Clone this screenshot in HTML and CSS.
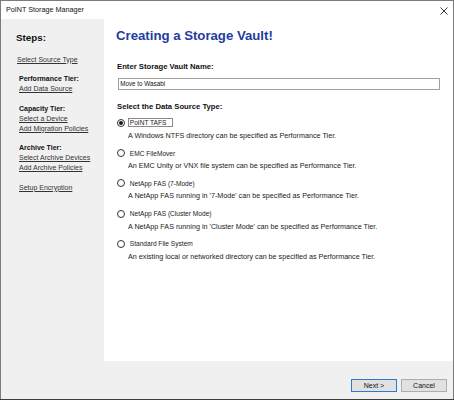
FILE: index.html
```html
<!DOCTYPE html>
<html>
<head>
<meta charset="utf-8">
<link rel="stylesheet" href="styles.css">
</head>
<body>
<div class="window">
  <div class="titlebar">
    <span class="title">PoINT Storage Manager</span>
    <svg class="close" width="8" height="8" viewBox="0 0 8 8"><path d="M0.5 0.5L7.5 7.5M7.5 0.5L0.5 7.5" stroke="#222" stroke-width="0.9" fill="none"/></svg>
  </div>
  <div class="main">
    <aside class="sidebar">
      <div class="steps">Steps:</div>
      <div class="group first"><a class="link">Select Source Type</a></div>
      <div class="group"><div class="head">Performance Tier:</div><a class="link">Add Data Source</a></div>
      <div class="group"><div class="head">Capacity Tier:</div><a class="link">Select a Device</a><a class="link">Add Migration Policies</a></div>
      <div class="group"><div class="head">Archive Tier:</div><a class="link">Select Archive Devices</a><a class="link">Add Archive Policies</a></div>
      <div class="group"><a class="link">Setup Encryption</a></div>
    </aside>
    <section class="content">
      <h1 class="heading">Creating a Storage Vault!</h1>
      <div class="label first-label">Enter Storage Vault Name:</div>
      <div class="input">Move to Wasabi</div>
      <div class="label second-label">Select the Data Source Type:</div>
      <div class="options">
        <div class="option">
          <div class="opt-row"><span class="radio checked"></span><span class="opt-label focused">PoINT TAFS</span></div>
          <div class="desc">A Windows NTFS directory can be specified as Performance Tier.</div>
        </div>
        <div class="option">
          <div class="opt-row"><span class="radio"></span><span class="opt-label">EMC FileMover</span></div>
          <div class="desc">An EMC Unity or VNX file system can be specified as Performance Tier.</div>
        </div>
        <div class="option">
          <div class="opt-row"><span class="radio"></span><span class="opt-label">NetApp FAS (7-Mode)</span></div>
          <div class="desc">A NetApp FAS running in '7-Mode' can be specified as Performance Tier.</div>
        </div>
        <div class="option">
          <div class="opt-row"><span class="radio"></span><span class="opt-label">NetApp FAS (Cluster Mode)</span></div>
          <div class="desc">A NetApp FAS running in 'Cluster Mode' can be specified as Performance Tier.</div>
        </div>
        <div class="option">
          <div class="opt-row"><span class="radio"></span><span class="opt-label">Standard File System</span></div>
          <div class="desc">An existing local or networked directory can be specified as Performance Tier.</div>
        </div>
      </div>
    </section>
  </div>
  <div class="footer">
    <button class="btn default">Next &gt;</button>
    <button class="btn">Cancel</button>
  </div>
</div>
</body>
</html>
```
FILE: styles.css
```css
* { box-sizing: border-box; }
html, body { margin: 0; padding: 0; }
body {
  width: 454px;
  height: 400px;
  background: #3d3d3d;
  font-family: "Liberation Sans", Arial, sans-serif;
  color: #1a1a1a;
  overflow: hidden;
}
.window {
  width: 454px;
  height: 399px;
  border: 1px solid #7c7c7c;
  border-bottom: none;
  display: flex;
  flex-direction: column;
  background: #f0f0f0;
}
.titlebar {
  height: 18px;
  background: #fff;
  display: flex;
  align-items: center;
  justify-content: space-between;
  padding: 0 5px 0 5px;
}
.title {
  font-size: 7.2px;
  line-height: 18px;
  color: #111;
}
.close { margin-top: 1px; margin-right: 0; }
.main {
  height: 342px;
  display: flex;
}
.sidebar {
  width: 103px;
  background: #f0f0f0;
  padding: 13.3px 0 0 15px;
  display: flex;
  flex-direction: column;
}
.steps {
  font-size: 9.8px;
  line-height: 12px;
  font-weight: bold;
  color: #111;
}
.group {
  display: flex;
  flex-direction: column;
  margin-top: 9.5px;
  padding-left: 3px;
}
.group.first { margin-top: 10.3px; padding-left: 1px; }
.head {
  font-size: 7px;
  line-height: 10px;
  font-weight: bold;
  color: #111;
}
.link {
  font-size: 7px;
  line-height: 10px;
  color: #333;
  text-decoration: underline;
  white-space: nowrap;
}
.content {
  flex: 1;
  background: #fff;
  padding: 9px 12px 0 13px;
}
.heading {
  margin: 0 0 0 -1px;
  font-size: 13.2px;
  line-height: 16px;
  font-weight: bold;
  color: #1f3c9e;
}
.label {
  font-size: 7.7px;
  line-height: 10px;
  font-weight: bold;
  color: #111;
}
.first-label { margin-top: 17.6px; }
.input {
  margin-top: 6px;
  margin-left: 0.7px;
  width: 322px;
  height: 12.3px;
  border: 1px solid #a0a0a0;
  font-size: 6.3px;
  line-height: 10.3px;
  padding-left: 1.5px;
  color: #111;
}
.second-label { margin-top: 11.7px; }
.options {
  margin-top: 6.2px;
  display: flex;
  flex-direction: column;
  gap: 7.25px;
}
.option { display: flex; flex-direction: column; }
.opt-row {
  height: 10px;
  display: flex;
  align-items: center;
}
.radio {
  width: 8px;
  height: 8px;
  border: 1px solid #333;
  border-radius: 50%;
  background: #fff;
  display: flex;
  align-items: center;
  justify-content: center;
  margin-left: 0.3px;
}
.radio.checked::after {
  content: "";
  width: 4px;
  height: 4px;
  border-radius: 50%;
  background: #1a1a1a;
}
.opt-label {
  margin-left: 2.7px;
  height: 9px;
  line-height: 7px;
  border: 1px solid transparent;
  padding: 0 6px 0 0.8px;
  font-size: 6.6px;
  color: #1a1a1a;
  white-space: nowrap;
}
.opt-label.focused { border-color: #8a8a8a; }
.desc {
  margin-top: 3px;
  padding-left: 11px;
  font-size: 7.2px;
  line-height: 10px;
  color: #1a1a1a;
  white-space: nowrap;
}
.footer {
  flex: 1;
  display: flex;
  justify-content: flex-end;
  align-items: flex-start;
  gap: 4px;
  padding: 18px 6px 0 0;
}
.btn {
  width: 46px;
  height: 13px;
  margin: 0;
  padding: 0;
  border: 1px solid #adadad;
  background: #e1e1e1;
  font-family: "Liberation Sans", Arial, sans-serif;
  font-size: 7px;
  line-height: 11px;
  color: #111;
}
.btn.default { border-color: #2a7bd0; }
```
